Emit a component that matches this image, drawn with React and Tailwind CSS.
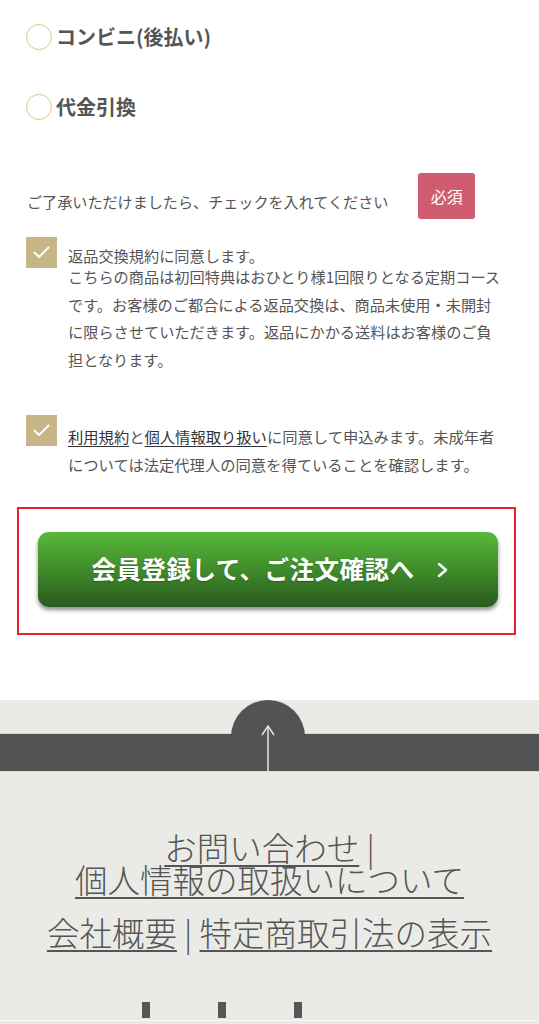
import React from 'react'

const FONT = { fontFamily: '"Noto Sans CJK JP", "Noto Sans", sans-serif' }

function Radio({ label }) {
  return (
    <label className="flex items-center gap-[4px] h-[26px]">
      <span className="w-[26px] h-[26px] rounded-full border-[1.5px] border-[#d8c690] bg-white shrink-0" />
      <span className="text-[20px] font-bold text-[#555] leading-none">{label}</span>
    </label>
  )
}

function CheckBox() {
  return (
    <span className="w-[31px] h-[31px] bg-[#c6b586] flex items-center justify-center shrink-0">
      <svg width="17" height="13" viewBox="0 0 17 13" fill="none">
        <polyline points="1.5,6.5 6,11 15.5,1.5" stroke="#fff" strokeWidth="2" strokeLinecap="round" strokeLinejoin="round" />
      </svg>
    </span>
  )
}

export default function App() {
  return (
    <div className="w-[539px] h-[1024px] overflow-hidden bg-white text-[#555]" style={FONT}>
      {/* payment options */}
      <div className="pl-[26px] pt-[24px]">
        <Radio label="コンビニ(後払い)" />
        <div className="mt-[44px]">
          <Radio label="代金引換" />
        </div>
      </div>

      {/* agreement */}
      <div className="pl-[27px] mt-[53px] flex items-start">
        <p className="text-[15.1px] leading-[20px] mt-[18px] whitespace-nowrap">
          ご了承いただけましたら、チェックを入れてください
        </p>
        <span className="ml-[30px] w-[57px] h-[46px] rounded-[3px] bg-[#cf5b6e] text-white text-[16px] flex items-center justify-center">
          必須
        </span>
      </div>

      <div className="pl-[26px] mt-[18px] flex items-start gap-[11px]">
        <CheckBox />
        <div className="mt-[7px] text-[15.2px]">
          <div className="leading-[22px]">返品交換規約に同意します。</div>
          <p className="leading-[27.5px] -mt-[3px] whitespace-nowrap">
            こちらの商品は初回特典はおひとり様1回限りとなる定期コース
            <br />
            です。お客様のご都合による返品交換は、商品未使用・未開封
            <br />
            に限らさせていただきます。返品にかかる送料はお客様のご負
            <br />
            担となります。
          </p>
        </div>
      </div>

      <div className="pl-[26px] mt-[42px] flex items-start gap-[11px]">
        <CheckBox />
        <p className="mt-[8px] text-[15.3px] leading-[27.5px] whitespace-nowrap">
          <a className="underline underline-offset-[3px] text-[#333]">利用規約</a>と
          <a className="underline underline-offset-[3px] text-[#333]">個人情報取り扱い</a>
          に同意して申込みます。未成年者
          <br />
          については法定代理人の同意を得ていることを確認します。
        </p>
      </div>

      {/* submit */}
      <div className="ml-[17px] mt-[29px] w-[499px] h-[128px] border-[2px] border-[#e8202a] pt-[23px] pl-[19px]">
        <button className="w-[460px] h-[75px] rounded-[11px] bg-linear-to-b from-[#59b93a] via-[#3f8c2b] to-[#295a1d] shadow-[0_3px_4px_rgba(0,0,0,0.45)] flex items-center justify-center gap-[22px] pl-[4px] text-white">
          <span className="text-[24.5px] font-bold tracking-[0.5px] [text-shadow:0_1px_1px_rgba(0,0,0,0.25)]">
            会員登録して、ご注文確認へ
          </span>
          <svg width="12" height="16" viewBox="0 0 12 16" fill="none">
            <polyline points="2,2 9,8 2,14" stroke="#fff" strokeWidth="2.5" strokeLinecap="round" strokeLinejoin="round" />
          </svg>
        </button>
      </div>

      {/* footer */}
      <footer className="relative mt-[65px] bg-[#eaeae6] h-[324px]">
        <div className="absolute left-[231px] top-0 w-[74px] h-[40px] rounded-t-full bg-[#525453]" />
        <div className="pt-[33px]">
          <div className="h-[39px] bg-[#525453] border-t border-b border-[#d6d6d2]" />
        </div>
        <svg className="absolute left-[260px] top-[24px]" width="16" height="48" viewBox="0 0 16 48" fill="none">
          <line x1="8" y1="2" x2="8" y2="48" stroke="#e4e4e0" strokeWidth="1.5" />
          <polyline points="2,11 8,2 14,11" stroke="#e4e4e0" strokeWidth="1.5" fill="none" />
        </svg>

        <div className="pt-[59px] text-center text-[32.5px] font-light text-[#555]">
          <p className="leading-[32px]">
            <a className="underline decoration-2 underline-offset-[4px]">お問い合わせ</a> |
            <br />
            <a className="underline decoration-2 underline-offset-[4px]">個人情報の取扱いについて</a>
          </p>
          <p className="leading-[32px] mt-[21px]">
            <a className="underline decoration-2 underline-offset-[4px]">会社概要</a> |{' '}
            <a className="underline decoration-2 underline-offset-[4px]">特定商取引法の表示</a>
          </p>
        </div>

        <div className="flex gap-[68px] pl-[142px] mt-[54px]">
          <span className="w-[8px] h-[16px] bg-[#555]" />
          <span className="w-[8px] h-[16px] bg-[#555]" />
          <span className="w-[8px] h-[16px] bg-[#555]" />
        </div>
        <div className="mt-[2px] h-[1px] bg-[#f7f7f5]" />
      </footer>
    </div>
  )
}
